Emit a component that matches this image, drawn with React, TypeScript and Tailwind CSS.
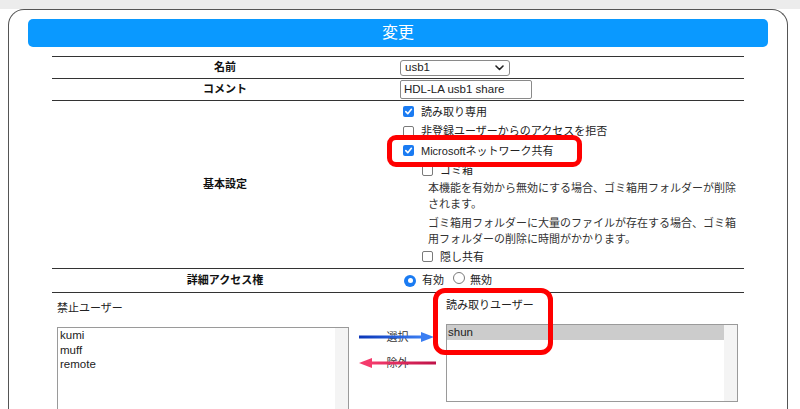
import React from 'react';

const Check: React.FC<{ checked?: boolean }> = ({ checked }) =>
    checked ? (
        <span className="inline-flex w-[11px] h-[11px] shrink-0 rounded-[2px] bg-[#1a7bf2] items-center justify-center">
            <svg width="9" height="9" viewBox="0 0 10 10">
                <path d="M2 5.2 L4.2 7.4 L8.2 2.6" fill="none" stroke="white" strokeWidth="1.8" strokeLinecap="round" strokeLinejoin="round" />
            </svg>
        </span>
    ) : (
        <span className="inline-block w-[11px] h-[11px] shrink-0 rounded-[2px] border border-[#7a7a7a] bg-white" />
    );

const Radio: React.FC<{ checked?: boolean }> = ({ checked }) =>
    checked ? (
        <span className="inline-flex w-[12px] h-[12px] shrink-0 rounded-full bg-[#1a7bf2] items-center justify-center">
            <span className="w-[5px] h-[5px] rounded-full bg-white" />
        </span>
    ) : (
        <span className="inline-block w-[12px] h-[12px] shrink-0 rounded-full border border-[#7a7a7a] bg-white" />
    );

const Arrow: React.FC<{ dir: 'right' | 'left'; label: string }> = ({ dir, label }) => (
    <div className="relative h-[16px] w-[77px] flex items-center justify-center text-[11px] text-[#333]">
        {label}
        <svg className="absolute inset-0" width="77" height="16" viewBox="0 0 77 16">
            <defs>
                <linearGradient id="gb" x1="0" x2="1" y1="0" y2="0">
                    <stop offset="0" stopColor="#0b36b8" />
                    <stop offset="1" stopColor="#3b7ef2" />
                </linearGradient>
                <linearGradient id="gr" x1="0" x2="1" y1="0" y2="0">
                    <stop offset="0" stopColor="#f43b6c" />
                    <stop offset="1" stopColor="#bf1248" />
                </linearGradient>
            </defs>
            {dir === 'right' ? (
                <>
                    <rect x="0" y="6.5" width="64" height="3" fill="url(#gb)" />
                    <path d="M62 3 L75 8 L62 13 Z" fill="#3b7ef2" />
                </>
            ) : (
                <>
                    <rect x="12" y="6.5" width="65" height="3" fill="url(#gr)" />
                    <path d="M0 8 L13 3 L13 13 Z" fill="#f43b6c" />
                </>
            )}
        </svg>
    </div>
);

const Row: React.FC<{ label: string; h: string; children: React.ReactNode }> = ({ label, h, children }) => (
    <div className={`grid grid-cols-2 border-b border-[#333] ${h}`}>
        <div className="flex items-center justify-center font-bold text-[11px] text-[#111]">{label}</div>
        <div className="flex items-center pl-[2px]">{children}</div>
    </div>
);

export default function App() {
    return (
        <div className="relative h-[409px] w-[800px] overflow-hidden bg-white text-[#222] font-['Liberation_Sans','Noto_Sans_CJK_JP',sans-serif]">
            <div className="h-[9px] bg-[#ececec]" />

            <div className="ml-[8px] w-[780px] h-[420px] rounded-t-[16px] border border-b-0 border-[#555] px-[19px] pt-[9px]">
                <div className="h-[28px] rounded-[5px] bg-[#0a99ff] text-white text-[16px] flex items-center justify-center">
                    変更
                </div>

                <div className="mx-[24px] mt-[9px]">
                    <div className="border-t border-[#333]">
                        <Row label="名前" h="h-[22px]">
                            <div className="w-[110px] h-[16px] rounded-[3px] border border-[#8a8a8a] bg-white flex items-center justify-between pl-[4px] pr-[5px] text-[11.5px]">
                                <span>usb1</span>
                                <svg width="9" height="6" viewBox="0 0 9 6">
                                    <path d="M1 1 L4.5 4.5 L8 1" fill="none" stroke="#222" strokeWidth="1.6" strokeLinecap="round" strokeLinejoin="round" />
                                </svg>
                            </div>
                        </Row>
                        <Row label="コメント" h="h-[22px]">
                            <div className="w-[132px] h-[19px] rounded-[2px] border border-[#8a8a8a] bg-white flex items-center pl-[3px] text-[11.5px]">
                                HDL-LA usb1 share
                            </div>
                        </Row>
                        <div className="grid grid-cols-2 border-b border-[#333] h-[168px]">
                            <div className="flex items-center justify-center font-bold text-[11px] text-[#111]">基本設定</div>
                            <div className="pl-[5px] pt-[1px] text-[11px]">
                                <div className="h-[19.5px] flex items-center gap-[7px]">
                                    <Check checked />
                                    <span>読み取り専用</span>
                                </div>
                                <div className="h-[19.5px] flex items-center gap-[7px]">
                                    <Check />
                                    <span>非登録ユーザーからのアクセスを拒否</span>
                                </div>
                                <div className="h-[19.5px] flex items-center gap-[7px]">
                                    <Check checked />
                                    <span>Microsoftネットワーク共有</span>
                                </div>
                                <div className="h-[19.5px] flex items-center gap-[7px] pl-[19px]">
                                    <Check />
                                    <span>ゴミ箱</span>
                                </div>
                                <div className="pl-[25px] w-[341px] text-[#333] leading-[16px]">
                                    <p>本機能を有効から無効にする場合、ゴミ箱用フォルダーが削除されます。</p>
                                    <p className="mt-[3px]">ゴミ箱用フォルダーに大量のファイルが存在する場合、ゴミ箱用フォルダーの削除に時間がかかります。</p>
                                </div>
                                <div className="h-[19.5px] flex items-center gap-[7px] pl-[19px]">
                                    <Check />
                                    <span>隠し共有</span>
                                </div>
                            </div>
                        </div>
                        <Row label="詳細アクセス権" h="h-[24px]">
                            <div className="flex items-center text-[11px] pl-[4px]">
                                <Radio checked />
                                <span className="ml-[6px]">有効</span>
                                <span className="ml-[9px]"><Radio /></span>
                                <span className="ml-[5px]">無効</span>
                            </div>
                        </Row>
                    </div>

                    <div className="flex pl-[5px] text-[11px]">
                        <div className="pt-[7px] w-[292px]">
                            <div className="h-[16px] flex items-center">禁止ユーザー</div>
                            <div className="mt-[11px] h-[100px] border border-[#9a9a9a] flex text-[11.5px]">
                                <div className="flex-1 pl-[2px] leading-[14.5px]">
                                    <div>kumi</div>
                                    <div>muff</div>
                                    <div>remote</div>
                                </div>
                                <div className="w-[13px] bg-[#f4f4f4]" />
                            </div>
                        </div>

                        <div className="ml-[10px] pt-[36px] flex flex-col gap-[10px]">
                            <Arrow dir="right" label="選択" />
                            <Arrow dir="left" label="除外" />
                        </div>

                        <div className="ml-[10px] pt-[4px] w-[292px]">
                            <div className="h-[16px] flex items-center">読み取りユーザー</div>
                            <div className="mt-[11px] h-[78px] border border-[#9a9a9a] flex text-[11.5px]">
                                <div className="flex-1">
                                    <div className="h-[15px] bg-[#cccccc] pl-[1px] leading-[15px]">shun</div>
                                </div>
                                <div className="w-[13px] bg-[#f4f4f4]" />
                            </div>
                        </div>
                    </div>
                </div>
            </div>

            <div className="absolute left-[387px] top-[135px] w-[195px] h-[32px] rounded-[9px] border-[5px] border-[#ff0000]" />
            <div className="absolute left-[433px] top-[288px] w-[120px] h-[67px] rounded-[12px] border-[5px] border-[#ff0000]" />
        </div>
    );
}
